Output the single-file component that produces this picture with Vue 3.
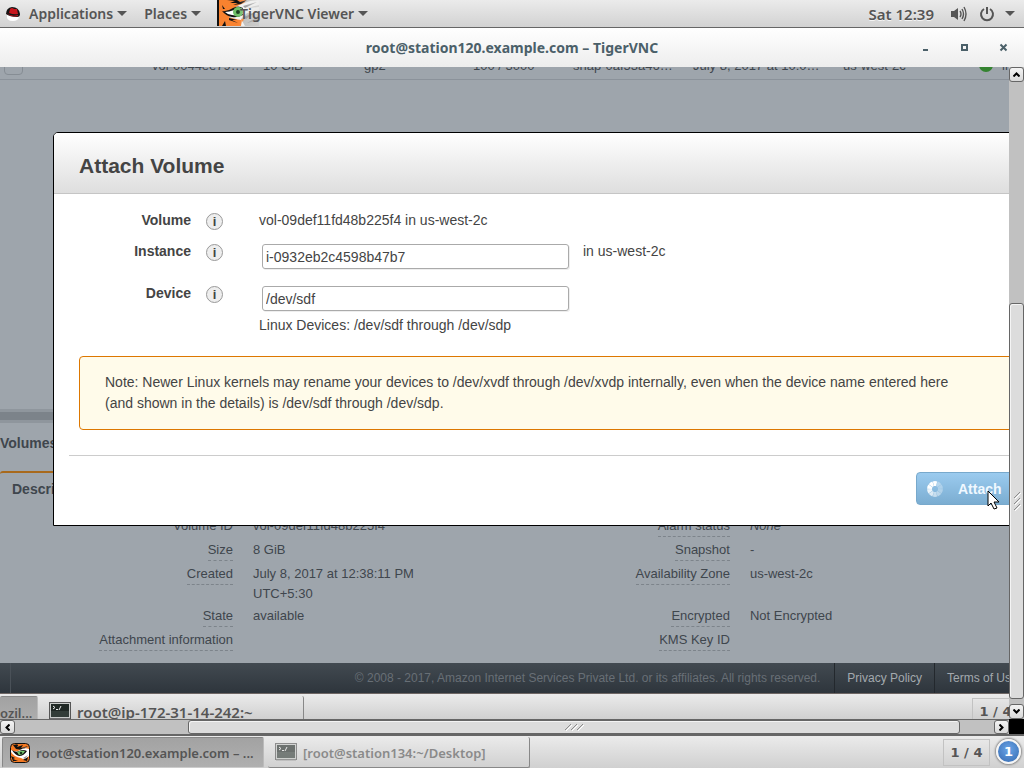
<script setup>
const tableRow = ['vol-0044ee79…', '10 GiB', 'gp2', '100 / 3000', 'snap-0af53a46…', 'July 8, 2017 at 10:0…', 'us-west-2c']

const leftDetails = [
  { label: 'Volume ID', value: 'vol-09def11fd48b225f4', plain: true },
  { label: 'Size', value: '8 GiB' },
  { label: 'Created', value: 'July 8, 2017 at 12:38:11 PM UTC+5:30' },
  { label: 'State', value: 'available' },
  { label: 'Attachment information', value: '' }
]
const rightDetails = [
  { label: 'Alarm status', value: 'None', italic: true },
  { label: 'Snapshot', value: '-' },
  { label: 'Availability Zone', value: 'us-west-2c' },
  { label: 'Encrypted', value: 'Not Encrypted' },
  { label: 'KMS Key ID', value: '' }
]
const spokes = [1, 0.35, 0.3, 0.35, 0.45, 0.55, 0.7, 0.85, 1, 1]
</script>

<template>
  <div class="desktop">
    <svg class="defs" width="0" height="0" aria-hidden="true">
      <symbol id="tiger" viewBox="0 0 20 20">
        <rect x="0.5" y="0.5" width="19" height="19" rx="4" fill="#f47a24" stroke="#111" />
        <path d="M3 2L9 1L7 4L13 2L11 5L18 3L12 7L6 6Z" fill="#111" />
        <path d="M7 1L12 1L9 3ZM13 1L17 2L14 3Z" fill="#f47a24" />
        <path d="M1 7Q5 9 8 8Q14 4 19 6V13Q15 18 11 15Q4 14 1 9Z" fill="#fff" />
        <path d="M2 7Q6 10 9 8Q13 6 17 8Q14 13 9 13Q5 12 2 7Z" fill="#111" />
        <path d="M7 9Q11 7 15 8Q13 12 9 12Z" fill="#73c66c" />
        <circle cx="11" cy="10" r="1.3" fill="#16351b" />
        <path d="M1 13L5 15L3 16L8 18L3 18ZM13 17L18 14L17 18Z" fill="#111" />
        <path d="M12 5L18 4L13 6ZM13 15L18 12L15 16Z" fill="#999" />
      </symbol>
      <symbol id="terminal" viewBox="0 0 22 18">
        <rect x="0.5" y="0.5" width="21" height="16" fill="#c9cbc9" stroke="#555" />
        <rect x="2" y="2" width="18" height="13" fill="#202824" />
        <path d="M2 10H20M2 12H20M2 14H20" stroke="#46524c" stroke-width="1" />
        <path d="M4 4L6 5.500L4 7M7 7.500H9M12 4L10 8" fill="none" stroke="#eee" />
        <path d="M1 17H21" stroke="#888" />
      </symbol>
      <symbol id="grip" viewBox="0 0 20 8">
        <path d="M1 7L7 1M7 7L13 1M13 7L19 1" fill="none" stroke="#8b8b8b" />
        <path d="M2 8L8 2M8 8L14 2M14 8L20 2" fill="none" stroke="#fff" />
      </symbol>
    </svg>

    <header class="top-panel">
      <button class="menu apps">
        <svg class="hat" viewBox="0 0 16 16" aria-hidden="true">
          <path d="M2 9Q1 15 8 15Q13 15 14 11Z" fill="#fff" />
          <path d="M1 8Q1 2 7 1Q14 1 15 8Q15 11 12 11Q5 11 1 8Z" fill="#151515" />
          <path d="M5 3Q7 1 9 3L12 3L13 8Q9 9 4 7Z" fill="#c8161d" />
          <path d="M2 7Q6 11 13 9L13 10Q6 12 2 7Z" fill="#c8161d" />
        </svg>
        <span>Applications</span><i class="caret"></i>
      </button>
      <button class="menu"><span>Places</span><i class="caret"></i></button>
      <button class="menu viewer">
        <svg class="viewer-icon" viewBox="0 0 42 26" aria-hidden="true">
          <defs>
            <linearGradient id="fade" x1="0" x2="1"><stop offset="0.5" stop-color="#fff" /><stop offset="1" stop-color="#fff" stop-opacity="0.35" /></linearGradient>
            <mask id="fade-mask"><rect width="42" height="26" fill="url(#fade)" /></mask>
          </defs>
          <g mask="url(#fade-mask)">
            <rect width="42" height="26" fill="#bdbdbb" />
            <path d="M0 0H29L25 7L12 18L27 19L24 26H0Z" fill="#f9822f" />
            <path d="M0 0H2V26H0Z" fill="#111" />
            <path d="M16 9Q26 1 42 0V5L30 8L42 7V14L30 13L24 19L28 26H24L25 20Q16 19 12 16Z" fill="#f5f5f3" />
            <path d="M5 11Q10 12 16 8Q21 5 26 8V15Q20 18 15 17Q9 16 5 11Z" fill="#111" />
            <path d="M8 12Q12 12 17 10Q22 7 26 9V14Q20 16 15 15Q11 15 8 12Z" fill="#fff" />
            <circle cx="21" cy="12" r="5" fill="#6fbf67" /><circle cx="21" cy="12" r="2" fill="#1c4020" />
            <path d="M10 0L18 1L13 3L21 3L16 5L24 4L30 0L23 2L20 0ZM6 9L5 5L8 9ZM5 26L8 21L9 26ZM12 18L20 20L15 20L21 23L12 20Z" fill="#111" />
            <path d="M26 6L40 2L28 8ZM27 17L41 11L29 19ZM30 23L42 16V20Z" fill="#8c8c8c" />
          </g>
        </svg>
        <span>TigerVNC Viewer</span><i class="caret"></i>
      </button>
      <div class="status">
        <span>Sat 12:39</span>
        <button class="sys" aria-label="Sound">
          <svg width="18" height="16" viewBox="0 0 18 16"><path d="M1 5H4L8 2V14L4 11H1Z" fill="#555" /><path d="M10 5Q12 8 10 11M12 3Q15 8 12 13M14 1Q18 8 14 15" fill="none" stroke="#555" stroke-width="1.400" /></svg>
        </button>
        <button class="sys power" aria-label="Power">
          <svg width="16" height="16" viewBox="0 0 16 16"><path d="M5 3A6 6 0 1 0 11 3M8 1V8" fill="none" stroke="#555" stroke-width="2" /></svg>
          <i class="caret"></i>
        </button>
      </div>
    </header>

    <div class="title-bar">
      <h1>root@station120.example.com – TigerVNC</h1>
      <div class="window-buttons">
        <button aria-label="Minimize"><svg width="9" height="9" viewBox="0 0 9 9"><path d="M2 7H7" stroke="#4b6069" stroke-width="2" /></svg></button>
        <button aria-label="Maximize"><svg width="9" height="9" viewBox="0 0 9 9"><path d="M2 2H7V7H2Z" fill="none" stroke="#4b6069" stroke-width="2" /></svg></button>
        <button aria-label="Close"><svg width="9" height="9" viewBox="0 0 9 9"><path d="M1.500 1.500L7.500 7.500M7.500 1.500L1.500 7.500" stroke="#4b6069" stroke-width="2" /></svg></button>
      </div>
    </div>

    <main class="client">
      <div class="remote">
        <div class="console">
          <div class="list-clip">
            <table class="volumes">
              <tbody>
                <tr>
                  <td class="pick"><input type="checkbox" aria-label="Select volume" /></td>
                  <td v-for="(cell, i) in tableRow" :key="i" :class="'c' + i">{{ cell }}</td>
                  <td class="state"><i class="dot"></i>in-use</td>
                </tr>
              </tbody>
            </table>
          </div>
          <div class="blank"></div>
          <div class="splitter"></div>
          <h2 class="selected">Volumes: vol-09def11fd48b225f4</h2>
          <div class="tabs"><button>Description</button></div>
          <div class="details">
            <dl v-for="(group, g) in [leftDetails, rightDetails]" :key="g">
              <template v-for="item in group" :key="item.label">
                <dt :class="{ plain: item.plain }"><span>{{ item.label }}</span></dt>
                <dd :class="{ italic: item.italic }">{{ item.value }}</dd>
              </template>
            </dl>
          </div>
          <footer class="site-footer">
            <span class="footer-start"></span>
            <p>© 2008 - 2017, Amazon Internet Services Private Ltd. or its affiliates. All rights reserved.</p>
            <a href="#">Privacy Policy</a>
            <a href="#">Terms of Use</a>
          </footer>

          <section class="dialog" role="dialog" aria-labelledby="dialog-title">
            <h2 id="dialog-title">Attach Volume</h2>
            <form class="fields" @submit.prevent>
              <span class="label">Volume</span><i class="info">i</i>
              <p class="value">vol-09def11fd48b225f4 in us-west-2c</p>
              <label class="label" for="instance">Instance</label><i class="info">i</i>
              <div class="value field"><input id="instance" type="text" value="i-0932eb2c4598b47b7" /><span>in us-west-2c</span></div>
              <label class="label" for="device">Device</label><i class="info">i</i>
              <div class="value">
                <div class="field"><input id="device" type="text" value="/dev/sdf" /></div>
                <p class="hint">Linux Devices: /dev/sdf through /dev/sdp</p>
              </div>
            </form>
            <p class="note">Note: Newer Linux kernels may rename your devices to /dev/xvdf through /dev/xvdp internally, even when the device name entered here<br />(and shown in the details) is /dev/sdf through /dev/sdp.</p>
            <div class="actions">
              <button class="attach">
                <svg width="16" height="16" viewBox="0 0 16 16" aria-hidden="true">
                  <path v-for="(o, i) in spokes" :key="i" d="M5.800 0.400Q8 -0.400 10.200 0.400L8.900 5H7.100Z" fill="#fff" :fill-opacity="o" :transform="`rotate(${i * 36} 8 8)`" />
                </svg>
                <span>Attach</span>
              </button>
            </div>
          </section>
        </div>

        <div class="remote-panel">
          <button class="task pressed cut">ozil...</button>
          <button class="task second"><svg width="22" height="18" aria-hidden="true"><use href="#terminal" /></svg><span>root@ip-172-31-14-242:~</span></button>
          <span class="pager">1 / 4</span>
        </div>

        <svg class="pointer" width="13" height="20" viewBox="0 0 13 20" aria-hidden="true">
          <path d="M1 1V16L4 13L7 19L10 18L7 12H12Z" fill="#fff" stroke="#000" />
        </svg>
      </div>

      <div class="scroll vertical">
        <button aria-label="Scroll up"><svg width="7" height="5" viewBox="0 0 7 5"><path d="M0.500 4.500L3.500 1.500L6.500 4.500" /></svg></button>
        <div class="track"><i class="before"></i><i class="thumb"><svg width="20" height="8" class="grip"><use href="#grip" /></svg></i><i class="after"></i></div>
        <button aria-label="Scroll down"><svg width="7" height="5" viewBox="0 0 7 5"><path d="M0.500 0.500L3.500 3.500L6.500 0.500" /></svg></button>
      </div>
      <div class="scroll horizontal">
        <button aria-label="Scroll left"><svg width="5" height="7" viewBox="0 0 5 7"><path d="M4.500 0.500L1.500 3.500L4.500 6.500" /></svg></button>
        <div class="track"><i class="before"></i><i class="thumb"><svg width="20" height="8"><use href="#grip" /></svg></i><i class="after"></i></div>
        <button aria-label="Scroll right"><svg width="5" height="7" viewBox="0 0 5 7"><path d="M0.500 0.500L3.500 3.500L0.500 6.500" /></svg></button>
      </div>
      <div class="corner"></div>
    </main>

    <footer class="bottom-panel">
      <button class="task pressed"><svg width="20" height="20" aria-hidden="true"><use href="#tiger" /></svg><span>root@station120.example.com – ...</span></button>
      <button class="task minimized"><svg width="22" height="18" aria-hidden="true"><use href="#terminal" /></svg><span>[root@station134:~/Desktop]</span></button>
      <span class="pager">1 / 4</span>
      <button class="badge" aria-label="1 notification">1</button>
    </footer>
  </div>
</template>

<style>
body {
  margin: 0;
}
</style>

<style scoped>
* {
  box-sizing: border-box;
}
button {
  font: inherit;
  color: inherit;
  border: 0;
  padding: 0;
  background: none;
}
h1,
h2,
p,
dl,
dd {
  margin: 0;
}
.defs {
  position: absolute;
}
.desktop {
  display: flex;
  flex-direction: column;
  height: 100vh;
  overflow: hidden;
  color: #555;
  font-family: "Noto Sans", "Open Sans", sans-serif;
  font-weight: 600;
  font-size: 14px;
}

/* Top panel */
.top-panel {
  display: flex;
  flex: none;
  height: 28px;
  border-bottom: 1px solid #666;
  background: linear-gradient(#ebebeb, #d2d2d2);
  text-shadow: 0 1px #f4f4f4;
}
.menu {
  display: flex;
  align-items: center;
  gap: 4px;
  margin-right: 17px;
}
.apps {
  padding-left: 5px;
}
.hat {
  width: 16px;
  height: 16px;
  margin-right: 4px;
}
.caret {
  border: 5px solid transparent;
  border-top-color: #555;
  border-bottom: 0;
}
.viewer {
  position: relative;
  margin-left: -1px;
  padding-left: 23px;
}
.viewer span {
  position: relative;
}
.viewer-icon {
  position: absolute;
  left: 0;
  top: 0;
  width: 42px;
  height: 26px;
}
.status {
  display: flex;
  align-items: center;
  margin-left: auto;
  padding-right: 9px;
  font-size: 15px;
}
.sys {
  display: flex;
  align-items: center;
  gap: 10px;
  margin-left: 16px;
}
.power {
  margin-left: 11px;
}

/* Viewer window */
.title-bar {
  display: grid;
  grid-template-columns: 1fr auto 1fr;
  align-items: center;
  flex: none;
  height: 39px;
  color: #4b6069;
  background: linear-gradient(#fff, #ededed);
}
.title-bar h1 {
  grid-column: 2;
  font-size: 14px;
  font-weight: 700;
}
.window-buttons {
  display: flex;
  justify-content: flex-end;
  gap: 30px;
  padding-right: 16px;
}
.window-buttons svg,
.scroll svg {
  display: block;
}
.client {
  display: grid;
  flex: 1;
  grid-template-columns: minmax(0, 1fr) 15px;
  grid-template-rows: minmax(0, 1fr) 17px;
  min-height: 0;
}
.remote {
  display: flex;
  flex-direction: column;
  position: relative;
  min-width: 0;
  overflow: hidden;
}
.console {
  display: flex;
  flex-direction: column;
  flex: 1;
  position: relative;
  min-height: 0;
  overflow: hidden;
  color: #3f464d;
  background: #9ea5ac;
  font: 13px "Liberation Sans", Arial, sans-serif;
}

/* Console page */
.list-clip {
  display: flex;
  align-items: flex-end;
  flex: none;
  height: 13px;
  overflow: hidden;
  border-bottom: 1px solid #8b929a;
}
.volumes {
  flex: none;
  table-layout: fixed;
  width: 1060px;
  border-collapse: collapse;
}
.volumes td {
  height: 22px;
  padding: 0 0 4px;
  line-height: 16px;
  white-space: nowrap;
}
.volumes .pick {
  width: 152px;
  padding: 0 0 4px 4px;
}
.pick input {
  display: block;
  appearance: none;
  width: 19px;
  height: 19px;
  margin: 0;
  border: 1px solid #868d94;
  border-radius: 4px;
}
.c0 { width: 111px; }
.c1 { width: 101px; }
.c2 { width: 109px; }
.c3 { width: 100px; }
.c4 { width: 120px; }
.c5 { width: 150px; }
.c6 { width: 136px; }
.dot {
  display: inline-block;
  width: 14px;
  height: 14px;
  margin-right: 9px;
  border-radius: 50%;
  background: #348330;
  vertical-align: -2px;
}
.blank {
  flex: 1;
}
.splitter {
  flex: none;
  height: 14px;
  border-top: 3px solid #8f969d;
  border-bottom: 3px solid #8f969d;
  background: #7c838a;
}
.selected {
  flex: none;
  padding: 10px 0;
  font-size: 14px;
  line-height: 20px;
}
.tabs {
  display: flex;
  flex: none;
  padding-top: 8px;
}
.tabs button {
  width: 110px;
  border-top: 2px solid #a8691c;
  border-top-left-radius: 3px;
  padding: 6px 12px;
  font-size: 14px;
  font-weight: 700;
  line-height: 20px;
  text-align: left;
}
.details {
  display: flex;
  flex: none;
  padding: 11px 0 9px;
}
.details dl {
  display: grid;
  flex: 0 0 49.25%;
  grid-template-columns: 233px 170px;
  grid-template-rows: 24px 24px 42px 24px 24px;
  column-gap: 20px;
  line-height: 20px;
}
.details dt {
  text-align: right;
}
.details dt span {
  display: inline-block;
  border-bottom: 1px dashed #7d848b;
}
.details .plain span {
  border-color: transparent;
}
.italic {
  font-style: italic;
}
.site-footer {
  display: flex;
  flex: none;
  height: 31px;
  border-bottom: 1px solid #6e6664;
  color: #686f76;
  background: linear-gradient(#424a51, #2e353c);
  font-size: 12px;
  line-height: 30px;
  white-space: nowrap;
}
.footer-start {
  width: 11px;
  border-right: 1px solid #4a5158;
}
.site-footer p {
  margin-left: auto;
  padding-right: 14px;
}
.site-footer a {
  flex: none;
  border-left: 1px solid #23282d;
  padding: 0 12px;
  color: #a3a9ae;
  text-decoration: none;
}
.site-footer a:last-child {
  width: 75px;
  padding-right: 0;
}

/* Attach dialog */
.dialog {
  position: absolute;
  top: 65px;
  left: 53px;
  right: -20px;
  overflow: hidden;
  border: 1px solid #000;
  border-radius: 5px 5px 0 0;
  color: #444;
  background: #fff;
  font-size: 14px;
}
.dialog h2 {
  border-bottom: 1px solid #c5c5c5;
  padding: 21px 25px 15px;
  background: linear-gradient(#fff, #dedede);
  font-size: 21px;
  line-height: 24px;
}
.fields {
  display: grid;
  grid-template-columns: 137px 16px 1fr;
  column-gap: 15px;
  padding-top: 16px;
  line-height: 21px;
}
.label {
  font-weight: 700;
  text-align: right;
}
.info {
  display: block;
  width: 17px;
  height: 17px;
  margin-top: 3px;
  border: 1px solid #999;
  border-radius: 50%;
  background: #eee;
  font-size: 13px;
  font-style: normal;
  font-weight: 700;
  line-height: 15px;
  text-align: center;
}
.value {
  padding: 0 0 10px 22px;
}
.field {
  display: flex;
  align-items: flex-start;
}
.field input {
  width: 307px;
  height: 25px;
  margin: 3px 14px 4px 3px;
  border: 1px solid #aaa;
  border-radius: 3px;
  padding: 3px 3px 2px;
  outline: 0;
  box-shadow: 1px 1px #eee;
  color: #444;
  background: #fff;
  font: inherit;
}
.note {
  margin: 10px -5px 25px 25px;
  border: 1px solid #dd7700;
  border-radius: 4px;
  padding: 15px 25px;
  background: #fffbea;
  line-height: 21px;
  white-space: nowrap;
}
.actions {
  display: flex;
  justify-content: flex-end;
  margin-left: 15px;
  border-top: 1px solid #ccc;
  padding: 16px 0 20px;
}
.attach {
  display: flex;
  align-items: center;
  gap: 15px;
  height: 33px;
  width: 112px;
  padding-left: 10px;
  border: 1px solid #78a9cc;
  border-radius: 4px;
  color: #f0f8ff;
  background: linear-gradient(#9bcbef, #7badd1);
  font-weight: 700;
}
.pointer {
  position: absolute;
  right: 9px;
  bottom: 209px;
}

/* Task bars */
.remote-panel,
.bottom-panel {
  display: flex;
  flex: none;
  background: linear-gradient(#ebebeb, #d0d0d0);
  font-size: 13px;
  white-space: nowrap;
}
.remote-panel {
  height: 25px;
  overflow: hidden;
  padding-top: 2px;
}
.bottom-panel {
  height: 32px;
  padding: 1px 3px 1px 2px;
}
.task {
  display: flex;
  align-items: center;
  gap: 6px;
  width: 262px;
  height: 31px;
  padding-left: 7px;
  border-right: 1px solid #888;
  border-bottom: 1px solid #888;
  border-radius: 2px;
}
.task span {
  padding-top: 1px;
}
.pressed {
  border: 1px solid #888;
  border-right-color: #bbb;
  border-bottom-color: #ccc;
  background: linear-gradient(#a2a2a2, #b0b0b0);
}
.cut {
  width: 38px;
  padding: 2px 0 0;
  border-left: 0;
}
.second {
  width: 256px;
  margin-left: 10px;
  padding-left: 1px;
  font-size: 15px;
}
.minimized {
  margin-left: 4px;
  color: #8a8a8a;
}
.minimized svg {
  opacity: 0.6;
}
.pager {
  width: 47px;
  height: 27px;
  margin: 2px 6px 0 auto;
  border: 1px solid #c2c2c2;
  font-family: "DejaVu Sans", sans-serif;
  font-size: 13px;
  font-weight: 700;
  line-height: 25px;
  text-align: center;
}
.remote-panel .pager {
  margin-right: -10px;
}
.badge {
  width: 25px;
  height: 25px;
  margin-top: 2px;
  border: 2px solid #f6f6f6;
  border-radius: 50%;
  box-shadow: 0 0 2px 1px #888;
  color: #fff;
  background: radial-gradient(circle at 50% 40%, #6aa5e8, #3468ae);
  font: 700 13px/20px "DejaVu Sans", sans-serif;
}

/* Scroll bars */
.scroll {
  display: flex;
  background: #c1c1c1;
}
.vertical,
.vertical .track {
  flex-direction: column;
}
.horizontal {
  border-top: 1px solid #666;
  border-bottom: 2px solid #666;
}
.scroll button {
  display: flex;
  align-items: center;
  justify-content: center;
  flex: 0 0 15px;
  border: 1px solid #666;
  border-radius: 3px;
  background: linear-gradient(#f4f4f4, #d8d8d8);
}
.scroll button path {
  fill: none;
  stroke: #000;
  stroke-width: 2;
}
.track {
  display: flex;
  flex: 1;
}
.thumb {
  display: flex;
  align-items: center;
  justify-content: center;
  overflow: hidden;
  border: 1px solid #666;
  border-radius: 3px;
  background: #dcdcdc;
  box-shadow: inset 1px 1px #f4f4f4;
}
.thumb svg {
  flex: none;
}
.vertical .grip {
  transform: rotate(90deg) scaleY(-1);
}
.vertical .before { flex: 222; }
.vertical .thumb { flex: 395; }
.vertical .after { flex: 5; }
.horizontal .before { flex: 173; }
.horizontal .thumb { flex: 772; }
.horizontal .after { flex: 34; }
.corner {
  border-bottom: 2px solid #666;
  background: #000;
}
</style>
